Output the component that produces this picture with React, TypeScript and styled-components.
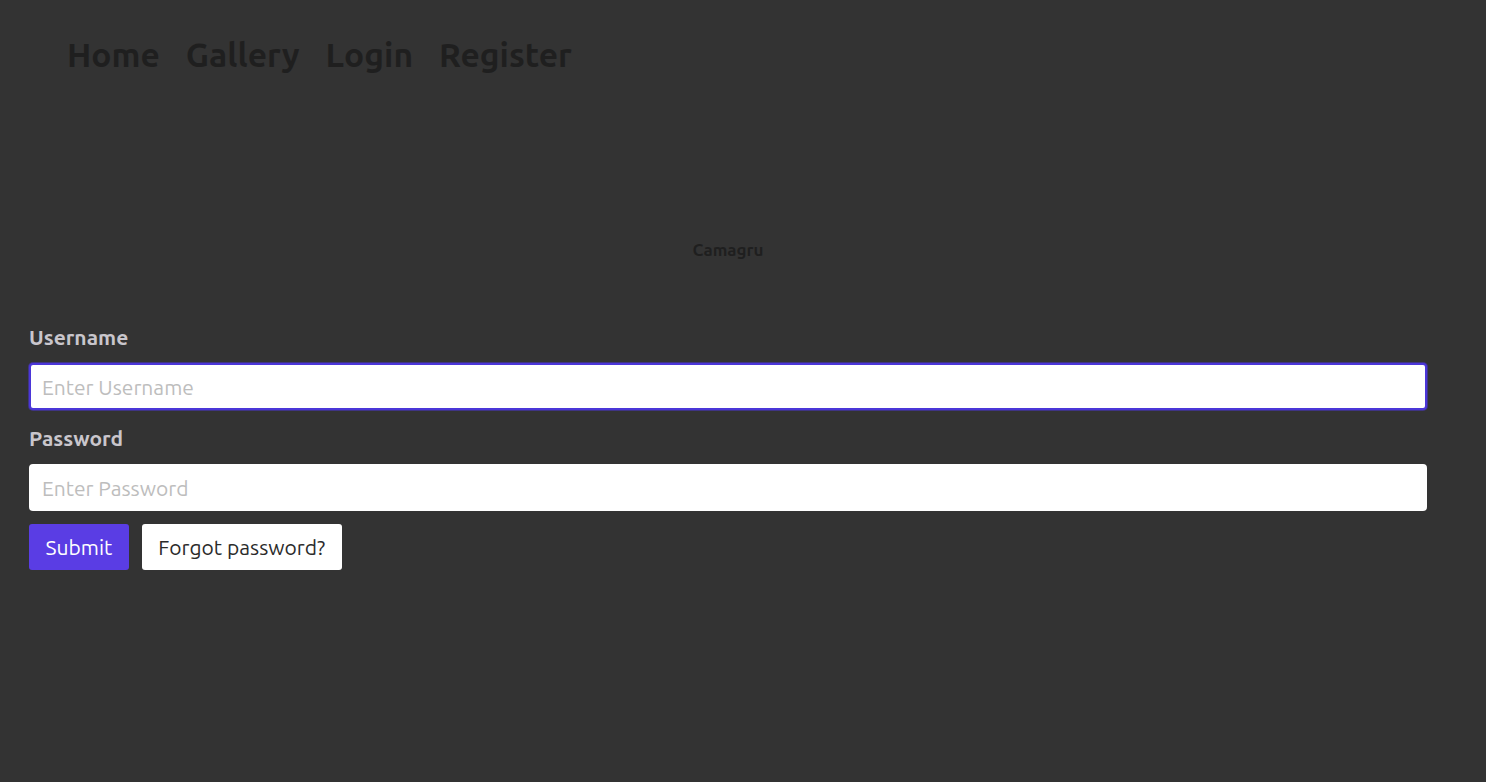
import styled, { createGlobalStyle } from "styled-components";

const GlobalStyle = createGlobalStyle`
  * {
    box-sizing: border-box;
  }

  html,
  body {
    margin: 0;
    padding: 0;
    background-color: #333333;
    font-family: "Ubuntu", "Noto Sans", "Open Sans", sans-serif;
    min-height: 100vh;
  }
`;

const Page = styled.div`
  min-height: 100vh;
  background-color: #333333;
`;

const Nav = styled.nav`
  display: flex;
  gap: 26px;
  padding: 38px 0 0 67px;
  height: 92px;
`;

const NavLink = styled.a`
  color: #1f1f1f;
  font-size: 33.6px;
  font-weight: 700;
  line-height: 1;
  text-decoration: none;
  cursor: pointer;
`;

const Container = styled.main`
  margin: 0 59px 0 29px;
  display: flex;
  flex-direction: column;
`;

const Title = styled.h1`
  margin: 148px 0 0;
  text-align: center;
  color: #1f1f1f;
  font-size: 17px;
  font-weight: 700;
`;

const Form = styled.form`
  display: flex;
  flex-direction: column;
  margin-top: 66px;
`;

const Label = styled.label`
  color: #c9c6cc;
  font-size: 21px;
  font-weight: 700;
  margin-bottom: 14px;
`;

const Input = styled.input<{ $focused?: boolean }>`
  height: 47px;
  width: 100%;
  padding: 0 11px;
  border-radius: 4px;
  border: 2px solid ${({ $focused }) => ($focused ? "#4b36d8" : "#ffffff")};
  box-shadow: ${({ $focused }) =>
    $focused ? "0 0 0 1px rgba(75, 54, 216, 0.5)" : "none"};
  background-color: #ffffff;
  font-family: inherit;
  font-size: 21px;
  color: #222222;
  margin-bottom: 16px;
  outline: none;

  &::placeholder {
    color: #bdbdbd;
  }
`;

const Actions = styled.div`
  display: flex;
  gap: 13px;
  margin-top: -3px;
`;

const Button = styled.button<{ $primary?: boolean }>`
  height: 46px;
  padding: 0 16.5px;
  border: none;
  border-radius: 3px;
  font-family: inherit;
  font-size: 21px;
  cursor: pointer;
  background-color: ${({ $primary }) => ($primary ? "#5a3de4" : "#ffffff")};
  color: ${({ $primary }) => ($primary ? "#ffffff" : "#2b2b2b")};
`;

export default function App() {
  return (
    <>
      <GlobalStyle />
      <Page>
        <Nav>
          <NavLink>Home</NavLink>
          <NavLink>Gallery</NavLink>
          <NavLink>Login</NavLink>
          <NavLink>Register</NavLink>
        </Nav>
        <Container>
          <Title>Camagru</Title>
          <Form onSubmit={(e) => e.preventDefault()}>
            <Label htmlFor="username">Username</Label>
            <Input
              id="username"
              type="text"
              placeholder="Enter Username"
              $focused
            />
            <Label htmlFor="password">Password</Label>
            <Input id="password" type="password" placeholder="Enter Password" />
            <Actions>
              <Button type="submit" $primary>
                Submit
              </Button>
              <Button type="button">Forgot password?</Button>
            </Actions>
          </Form>
        </Container>
      </Page>
    </>
  );
}
